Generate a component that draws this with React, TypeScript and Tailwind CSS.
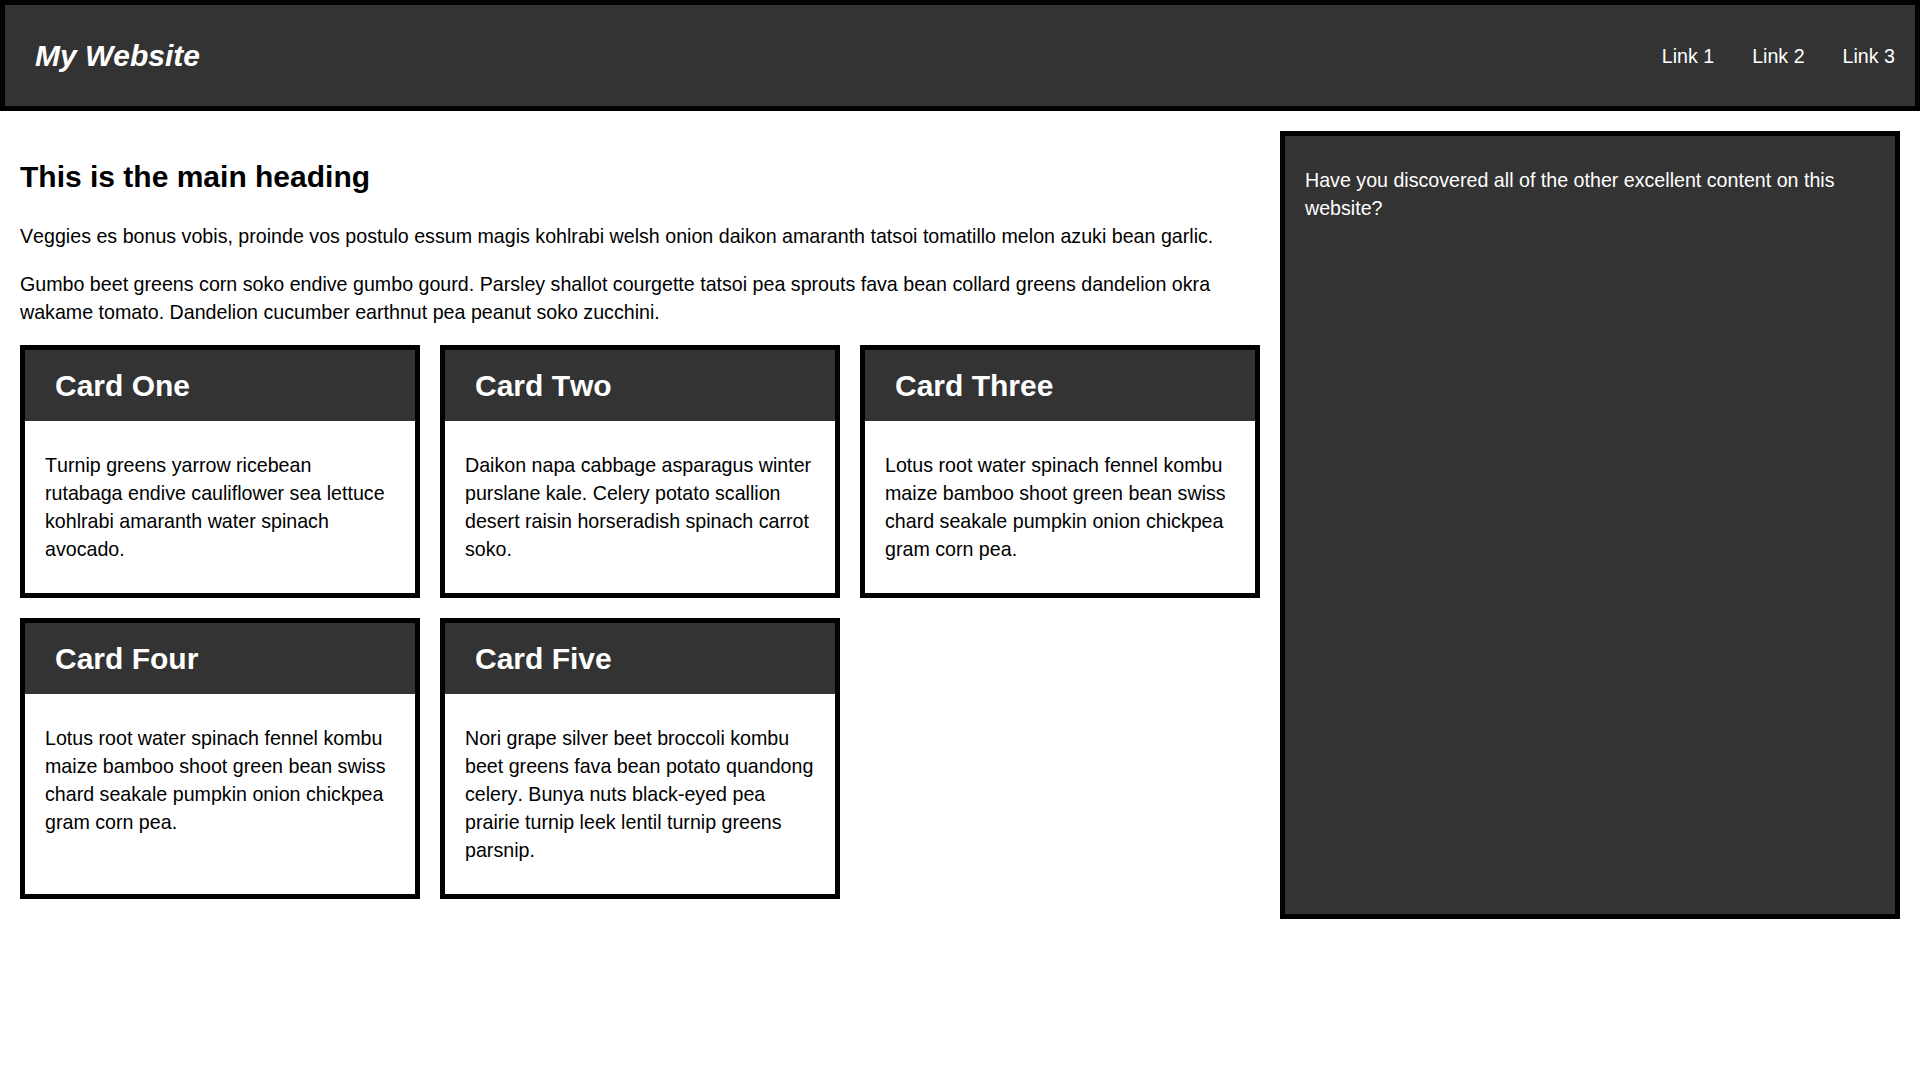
const cards = [
  {
    title: "Card One",
    body: "Turnip greens yarrow ricebean rutabaga endive cauliflower sea lettuce kohlrabi amaranth water spinach avocado.",
  },
  {
    title: "Card Two",
    body: "Daikon napa cabbage asparagus winter purslane kale. Celery potato scallion desert raisin horseradish spinach carrot soko.",
  },
  {
    title: "Card Three",
    body: "Lotus root water spinach fennel kombu maize bamboo shoot green bean swiss chard seakale pumpkin onion chickpea gram corn pea.",
  },
  {
    title: "Card Four",
    body: "Lotus root water spinach fennel kombu maize bamboo shoot green bean swiss chard seakale pumpkin onion chickpea gram corn pea.",
  },
  {
    title: "Card Five",
    body: "Nori grape silver beet broccoli kombu beet greens fava bean potato quandong celery. Bunya nuts black-eyed pea prairie turnip leek lentil turnip greens parsnip.",
  },
];

export default function App() {
  return (
    <div className="min-h-screen bg-white text-black [font-family:'Liberation_Sans',Arial,sans-serif] [font-kerning:none] text-[19.65px] leading-[28px]">
      <header className="flex h-[111px] items-center justify-between border-[5px] border-black bg-[#333333] pl-[30px] pr-[20px] text-white">
        <h1 className="text-[30px] font-bold italic leading-[36px]">My Website</h1>
        <nav className="flex gap-[38px]">
          <a href="#">Link 1</a>
          <a href="#">Link 2</a>
          <a href="#">Link 3</a>
        </nav>
      </header>

      <div className="grid grid-cols-[2fr_1fr] gap-[20px] px-[20px] pt-[20px]">
        <main className="min-w-0 pb-[20px]">
          <h2 className="mt-[28px] text-[30px] font-bold leading-[36px]">This is the main heading</h2>
          <p className="mt-[27px]">
            Veggies es bonus vobis, proinde vos postulo essum magis kohlrabi welsh onion daikon amaranth tatsoi tomatillo melon azuki bean garlic.
          </p>
          <p className="mt-[20px]">
            Gumbo beet greens corn soko endive gumbo gourd. Parsley shallot courgette tatsoi pea sprouts fava bean collard greens dandelion okra wakame tomato. Dandelion cucumber earthnut pea peanut soko zucchini.
          </p>

          <div className="mt-[19px] grid grid-cols-3 gap-[20px]">
            {cards.map((card) => (
              <div key={card.title} className="border-[5px] border-black bg-white">
                <h3 className="flex h-[71px] items-center bg-[#333333] pl-[30px] text-[30px] font-bold leading-[36px] text-white">
                  {card.title}
                </h3>
                <p className="py-[30px] pl-[20px] pr-[21px]">{card.body}</p>
              </div>
            ))}
          </div>
        </main>

        <aside className="min-w-0 border-[5px] border-black bg-[#333333] px-[20px] pt-[30px] text-white">
          <p>Have you discovered all of the other excellent content on this website?</p>
        </aside>
      </div>
    </div>
  );
}
